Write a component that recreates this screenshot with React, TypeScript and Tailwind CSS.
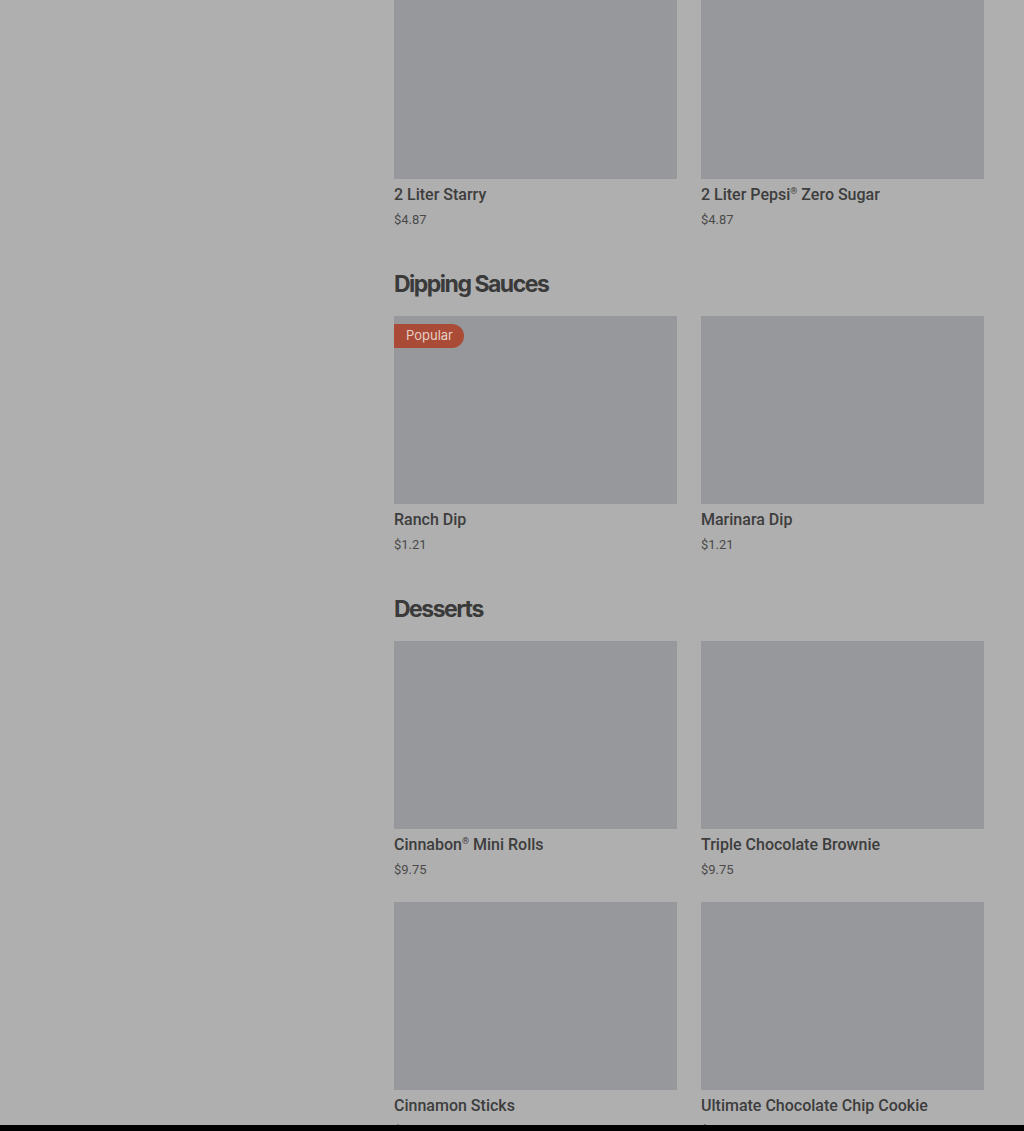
import React from 'react';

interface MenuItem {
  name: React.ReactNode;
  price: string;
  popular?: boolean;
}

interface Section {
  title?: string;
  items: MenuItem[];
}

const Reg = () => <span className="text-[9px] align-top leading-none relative top-[2px]">®</span>;

const sections: Section[] = [
  {
    items: [
      { name: '2 Liter Starry', price: '$4.87' },
      { name: <>2 Liter Pepsi<Reg /> Zero Sugar</>, price: '$4.87' },
    ],
  },
  {
    title: 'Dipping Sauces',
    items: [
      { name: 'Ranch Dip', price: '$1.21', popular: true },
      { name: 'Marinara Dip', price: '$1.21' },
    ],
  },
  {
    title: 'Desserts',
    items: [
      { name: <>Cinnabon<Reg /> Mini Rolls</>, price: '$9.75' },
      { name: 'Triple Chocolate Brownie', price: '$9.75' },
      { name: 'Cinnamon Sticks', price: '$2.75' },
      { name: 'Ultimate Chocolate Chip Cookie', price: '$2.75' },
    ],
  },
];

const MenuCard = ({ item }: { item: MenuItem }) => (
  <div className="flex flex-col">
    <div className="relative h-[188px] bg-[#96989c]">
      {item.popular && (
        <span className="absolute left-0 top-2 h-6 pl-3 pr-[11px] flex items-center rounded-r-full bg-[#a94b36] text-[13px] text-[#e6cfc8] font-['Inter',sans-serif]">
          Popular
        </span>
      )}
    </div>
    <div className="mt-[6px] text-base leading-5 font-medium text-[#3d3d3d]">{item.name}</div>
    <div className="mt-[6px] text-[13px] leading-[17px] text-[#4a4a4a]">{item.price}</div>
  </div>
);

const App = () => {
  return (
    <div
      className="h-[1131px] overflow-hidden bg-[#afafaf] relative"
      style={{ fontFamily: 'Roboto, "Noto Sans", sans-serif' }}
    >
      <div className="flex">
        <div className="w-[394px] shrink-0" />
        <main className="w-[590px] mt-[-9px] flex flex-col gap-10">
          {sections.map((section, i) => (
            <section key={i}>
              {section.title && (
                <h2 className="text-[23px] leading-8 font-bold tracking-[-0.065em] text-[#3a3a3a] mb-4 font-['Inter',sans-serif]">
                  {section.title}
                </h2>
              )}
              <div className="grid grid-cols-2 gap-x-6 gap-y-6">
                {section.items.map((item, j) => (
                  <MenuCard key={j} item={item} />
                ))}
              </div>
            </section>
          ))}
        </main>
      </div>
      <div className="absolute bottom-0 left-0 right-0 h-[6px] bg-black" />
    </div>
  );
};

export default App;
